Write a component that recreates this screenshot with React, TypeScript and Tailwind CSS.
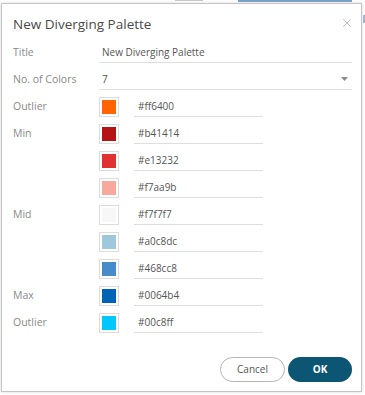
import { X } from "lucide-react";

const ROWS = [
  { label: "Outlier", hex: "#ff6400", swatch: "bg-[#ff6400]" },
  { label: "Min", hex: "#b41414", swatch: "bg-[#b41414]" },
  { label: "", hex: "#e13232", swatch: "bg-[#e13232]" },
  { label: "", hex: "#f7aa9b", swatch: "bg-[#f7aa9b]" },
  { label: "Mid", hex: "#f7f7f7", swatch: "bg-[#f7f7f7]" },
  { label: "", hex: "#a0c8dc", swatch: "bg-[#a0c8dc]" },
  { label: "", hex: "#468cc8", swatch: "bg-[#468cc8]" },
  { label: "Max", hex: "#0064b4", swatch: "bg-[#0064b4]" },
  { label: "Outlier", hex: "#00c8ff", swatch: "bg-[#00c8ff]" },
];

function ColorRow({ label, hex, swatch }: { label: string; hex: string; swatch: string }) {
  return (
    <div className="flex h-[27px] items-center">
      <div className="w-[86px] text-[10.5px] text-[#8a8a8a]">{label}</div>
      <div className="flex h-[20px] w-[20px] items-center justify-center border border-[#dcdcdc] bg-white">
        <div className={`h-[14px] w-[14px] ${swatch}`} />
      </div>
      <div className="ml-[15px] flex h-[20px] w-[129px] items-center border-b border-[#dedede] pl-[4px] pt-[1px] text-[10px] text-[#555]">
        {hex}
      </div>
    </div>
  );
}

export default function App() {
  return (
    <div className="relative h-[395px] w-[365px] overflow-hidden bg-white font-['Open_Sans',sans-serif]">
      {/* bits of the page behind the dialog */}
      <div className="absolute left-[238px] top-0 h-[2px] w-[114px] bg-[#7aa3c8]" />
      <div className="absolute left-[175px] top-0 h-[1px] w-[28px] bg-[#c8c8c8]" />
      <div className="absolute right-0 top-[15px] h-[8px] w-[2px] bg-[#9fbad2]" />

      <div className="relative ml-[1px] mt-[3px] flex h-[389px] w-[361px] flex-col border border-[#c4c4c4] bg-white shadow-[0_0_3px_rgba(0,0,0,0.15)]">
        <div className="flex h-[35px] items-center justify-between pl-[11px] pr-[7px]">
          <div className="pt-[6px] text-[13.5px] text-[#4a4a4a]">New Diverging Palette</div>
          <X size={14} strokeWidth={1.1} className="mt-[2px] text-[#9a9a9a]" />
        </div>

        <div className="flex flex-col pl-[11px] pr-[9px]">
          <div className="flex h-[27px] items-center">
            <div className="w-[86px] text-[10.5px] text-[#8a8a8a]">Title</div>
            <div className="flex h-[21px] flex-1 items-center border-b border-[#dedede] pl-[3px] text-[10px] text-[#555]">
              New Diverging Palette
            </div>
          </div>
          <div className="flex h-[27px] items-center">
            <div className="w-[86px] text-[10.5px] text-[#8a8a8a]">No. of Colors</div>
            <div className="flex h-[21px] flex-1 items-center justify-between border-b border-[#dedede] pl-[3px] pr-[4px] text-[10px] text-[#555]">
              <span>7</span>
              <svg width="7" height="4" viewBox="0 0 7 4">
                <path d="M0 0h7L3.5 4z" fill="#8a8a8a" />
              </svg>
            </div>
          </div>
          {ROWS.map((r, i) => (
            <ColorRow key={i} {...r} />
          ))}
        </div>

        <div className="mt-auto flex justify-end gap-[3px] pb-[9px] pr-[9px]">
          <button className="h-[25px] w-[65px] rounded-full border border-[#b5b5b5] bg-white text-[10px] text-[#555]">
            Cancel
          </button>
          <button className="h-[25px] w-[64px] rounded-full bg-[#0d5673] text-[10px] font-bold text-white">
            OK
          </button>
        </div>
      </div>
    </div>
  );
}
